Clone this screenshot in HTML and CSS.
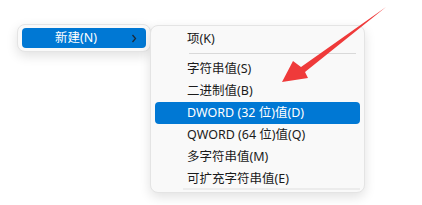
FILE: index.html
```html
<!DOCTYPE html>
<html lang="zh-CN">
<head>
<meta charset="UTF-8">
<title>新建</title>
<link rel="stylesheet" href="styles.css">
</head>
<body>

<div class="desk">
  <div class="menu parent-menu">
    <div class="item active">
      <span class="label">新建(N)</span>
      <svg class="chevron" width="6" height="9" viewBox="0 0 6 9">
        <path d="M1.5 1 L4.5 4.5 L1.5 8" fill="none" stroke="#1b2a3a" stroke-width="1.3"/>
      </svg>
    </div>
  </div>

  <div class="menu sub-menu">
    <div class="item first">项(K)</div>
    <div class="sep"></div>
    <div class="item">字符串值(S)</div>
    <div class="item">二进制值(B)</div>
    <div class="item active">DWORD (32 位)值(D)</div>
    <div class="item">QWORD (64 位)值(Q)</div>
    <div class="item">多字符串值(M)</div>
    <div class="item">可扩充字符串值(E)</div>
    <div class="scrollbar"></div>
  </div>

  <svg class="arrow" width="422" height="205" viewBox="0 0 422 205">
    <polygon points="282,82 293,61 301,67 386,7 305,72 308,78" fill="#ef3a3a"/>
  </svg>
</div>

</body>
</html>
```

FILE: styles.css
```css
* {
  box-sizing: border-box;
}

body {
  margin: 0;
  background: #fff;
  font-family: "Noto Sans", "Noto Sans CJK SC", sans-serif;
  font-size: 12.5px;
  color: #1b1b1b;
}

.desk {
  position: relative;
  width: 422px;
  height: 205px;
  display: flex;
  align-items: flex-start;
  padding-left: 17px;
}

.menu {
  background: #f9f9f9;
  border: 1px solid #e4e4e4;
  border-radius: 8px;
  box-shadow: 0 4px 12px rgba(0, 0, 0, 0.12);
}

.parent-menu {
  margin-top: 24px;
  width: 134px;
  padding: 3px 4px;
}

.parent-menu .item {
  display: flex;
  align-items: center;
  height: 20px;
  padding-left: 33px;
  padding-right: 9px;
}

.parent-menu .label {
  flex: 1;
}

.sub-menu {
  position: relative;
  margin-top: 25px;
  margin-left: -1px;
  width: 215px;
  padding: 2px 4px 2px 4px;
  z-index: 2;
}

.item {
  height: 22px;
  line-height: 22px;
  padding-left: 32px;
  border-radius: 4px;
  white-space: nowrap;
}

.sub-menu .item.first {
  height: 21px;
  line-height: 21px;
}

.item.active {
  background: #0078d4;
  color: #fff;
}

.sep {
  height: 1px;
  background: #d9d9d9;
  margin: 4px 4px 4px 34px;
}

.scrollbar {
  position: absolute;
  left: 32px;
  right: 4px;
  bottom: 2px;
  height: 2px;
  background: #ececec;
}

.arrow {
  position: absolute;
  left: 0;
  top: 0;
  z-index: 3;
  pointer-events: none;
}
```
